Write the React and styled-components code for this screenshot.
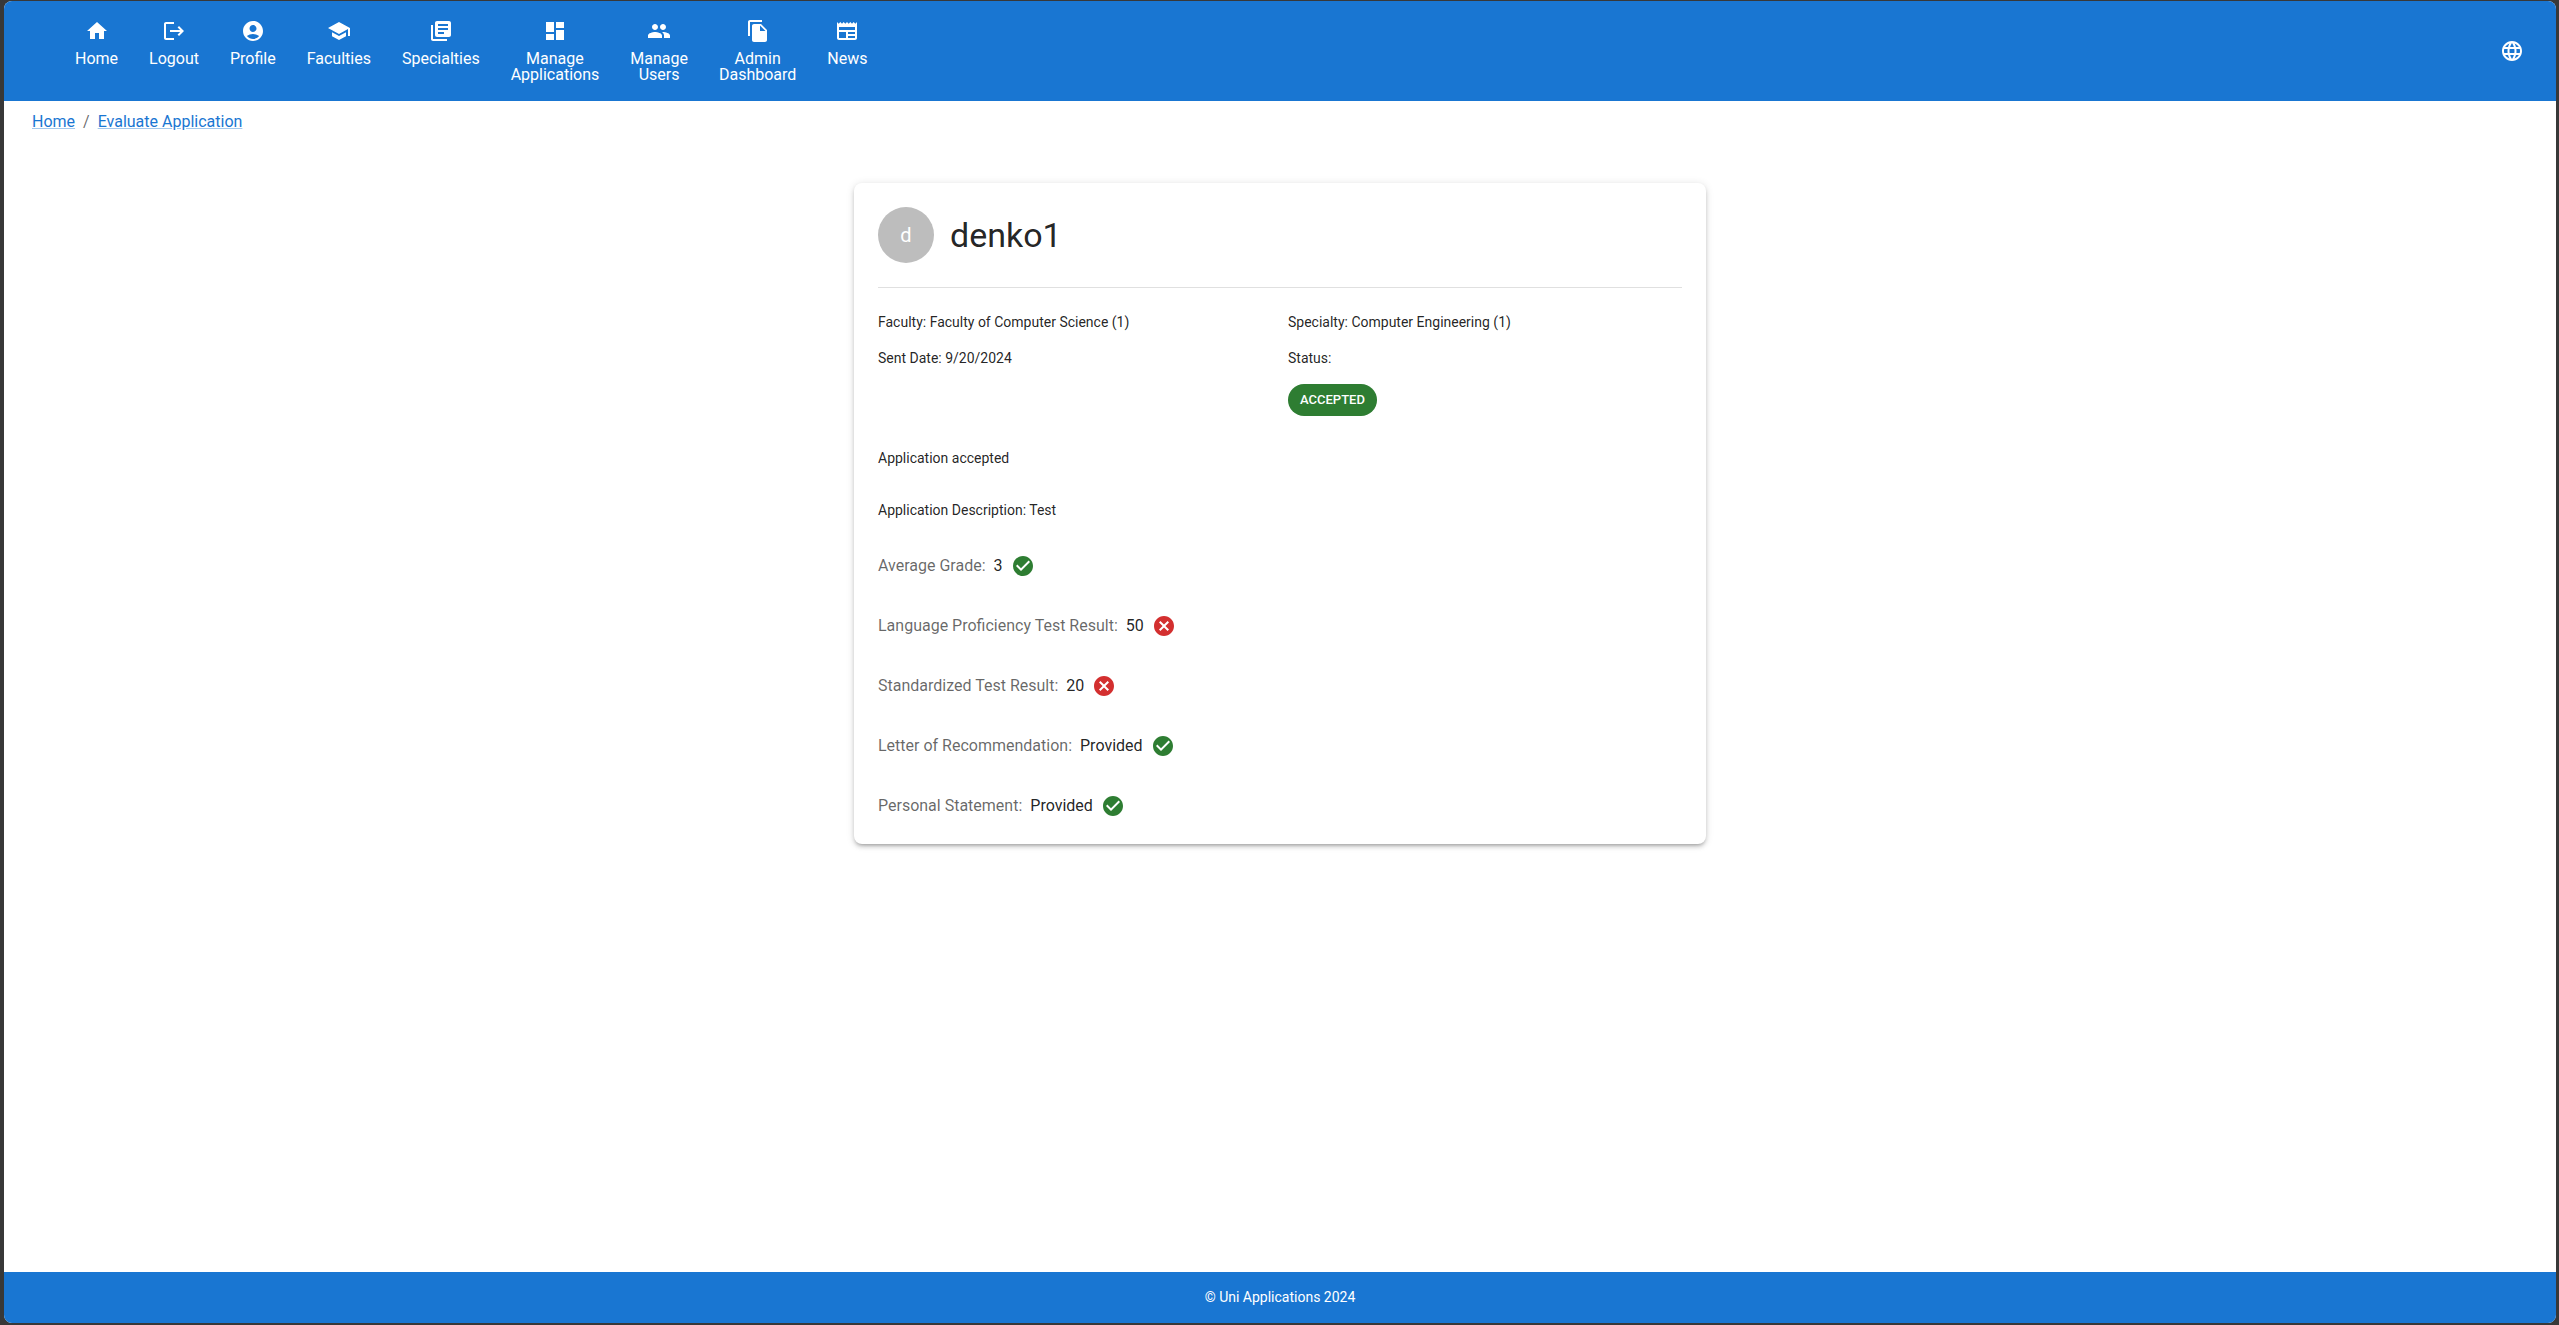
import React from "react";
import styled, { createGlobalStyle } from "styled-components";
import {
  MdHome,
  MdLogout,
  MdAccountCircle,
  MdSchool,
  MdLibraryBooks,
  MdDashboard,
  MdPeople,
  MdFileCopy,
  MdNewspaper,
  MdLanguage,
  MdCheckCircle,
  MdCancel,
} from "react-icons/md";

const GlobalStyle = createGlobalStyle`
  *, *::before, *::after { box-sizing: border-box; }
  body {
    margin: 0;
    background: #383838;
    color: rgba(0, 0, 0, 0.87);
    font-family: Roboto, "Liberation Sans", sans-serif;
    font-size: 16px;
    line-height: 24px;
  }
  ul, ol, dl, dd, p, h1 { margin: 0; padding: 0; }
  ul, ol { list-style: none; }
`;

const Page = styled.div`
  display: flex;
  min-height: 100vh;
  padding: 1px 3px 2px 4px;
`;

const Frame = styled.div`
  display: flex;
  flex: 1;
  flex-direction: column;
  overflow: hidden;
  border-radius: 8px;
  background: #fff;
`;

const Header = styled.header`
  display: flex;
  align-items: center;
  justify-content: space-between;
  min-height: 100px;
  padding: 0 24px 0 71px;
  background: #1976d2;
  color: #fff;
`;

const MainNav = styled.nav`
  align-self: flex-start;
  padding-top: 18px;
`;

const NavList = styled.ul`
  display: flex;
  gap: 31px;
`;

const NavLink = styled.a`
  display: flex;
  flex-direction: column;
  align-items: center;
  gap: 8px;
  color: inherit;
  line-height: 16px;
  text-align: center;
  text-decoration: none;
`;

const NavLabel = styled.span`
  white-space: pre-line;
`;

const IconButton = styled.button`
  display: flex;
  padding: 8px;
  border: 0;
  border-radius: 50%;
  background: transparent;
  color: inherit;
  cursor: pointer;
`;

const Crumbs = styled.ol`
  display: flex;
  gap: 8px;
  padding: 9px 28px;
  color: rgba(0, 0, 0, 0.6);
`;

const CrumbLink = styled.a`
  color: #1976d2;
  text-decoration: underline;
  text-decoration-color: rgba(25, 118, 210, 0.4);
`;

const Main = styled.main`
  flex: 1;
  width: 100%;
  max-width: 900px;
  margin: 0 auto;
  padding: 40px 24px;
`;

const Card = styled.article`
  padding: 24px 24px 8px;
  border-radius: 8px;
  background: #fff;
  box-shadow:
    0 3px 3px -2px rgba(0, 0, 0, 0.2),
    0 3px 4px 0 rgba(0, 0, 0, 0.14),
    0 1px 8px 0 rgba(0, 0, 0, 0.12);
`;

const Applicant = styled.div`
  display: flex;
  align-items: center;
  gap: 16px;
  padding-bottom: 24px;
  border-bottom: 1px solid rgba(0, 0, 0, 0.12);
`;

const Avatar = styled.div`
  display: flex;
  align-items: center;
  justify-content: center;
  width: 56px;
  height: 56px;
  border-radius: 50%;
  background: #bdbdbd;
  color: #fff;
  font-size: 20px;
`;

const Name = styled.h1`
  font-size: 34px;
  font-weight: 400;
  line-height: 42px;
`;

const Details = styled.div`
  display: grid;
  grid-template-columns: 1fr 1fr;
  gap: 16px;
  padding: 24px 0 32px;
`;

const Text = styled.p`
  font-size: 14px;
  line-height: 20px;
`;

const Status = styled.div`
  display: flex;
  flex-direction: column;
  align-items: flex-start;
  gap: 16px;
`;

const StatusChip = styled.span`
  padding: 0 12px;
  border-radius: 16px;
  background: #2e7d32;
  color: #fff;
  font-size: 13px;
  font-weight: 500;
  line-height: 32px;
  text-transform: uppercase;
`;

const Notes = styled.div`
  display: flex;
  flex-direction: column;
  gap: 32px;
  padding-bottom: 16px;
`;

const Criterion = styled.div`
  display: flex;
  align-items: center;
  gap: 8px;
  height: 60px;
`;

const Term = styled.dt`
  color: rgba(0, 0, 0, 0.6);
`;

const Value = styled.dd`
  display: flex;
  align-items: center;
  gap: 8px;

  svg {
    color: ${({ $met }) => ($met ? "#2e7d32" : "#d32f2f")};
  }
`;

const Footer = styled.footer`
  padding: 15px;
  background: #1976d2;
  color: #fff;
  font-size: 14px;
  line-height: 21px;
  text-align: center;
`;

const navItems = [
  { label: "Home", Icon: MdHome },
  { label: "Logout", Icon: MdLogout },
  { label: "Profile", Icon: MdAccountCircle },
  { label: "Faculties", Icon: MdSchool },
  { label: "Specialties", Icon: MdLibraryBooks },
  { label: "Manage\nApplications", Icon: MdDashboard },
  { label: "Manage\nUsers", Icon: MdPeople },
  { label: "Admin\nDashboard", Icon: MdFileCopy },
  { label: "News", Icon: MdNewspaper },
];

const criteria = [
  { term: "Average Grade:", value: "3", met: true },
  { term: "Language Proficiency Test Result:", value: "50", met: false },
  { term: "Standardized Test Result:", value: "20", met: false },
  { term: "Letter of Recommendation:", value: "Provided", met: true },
  { term: "Personal Statement:", value: "Provided", met: true },
];

export default function App() {
  return (
    <>
      <GlobalStyle />
      <Page>
        <Frame>
          <Header>
            <MainNav aria-label="Main">
              <NavList>
                {navItems.map(({ label, Icon }) => (
                  <li key={label}>
                    <NavLink href="#">
                      <Icon size={24} aria-hidden="true" />
                      <NavLabel>{label}</NavLabel>
                    </NavLink>
                  </li>
                ))}
              </NavList>
            </MainNav>
            <IconButton type="button" aria-label="Language">
              <MdLanguage size={24} />
            </IconButton>
          </Header>
          <nav aria-label="Breadcrumb">
            <Crumbs>
              <li><CrumbLink href="#">Home</CrumbLink></li>
              <li aria-hidden="true">/</li>
              <li><CrumbLink href="#">Evaluate Application</CrumbLink></li>
            </Crumbs>
          </nav>
          <Main>
            <Card>
              <Applicant>
                <Avatar>d</Avatar>
                <Name>denko1</Name>
              </Applicant>
              <Details>
                <Text>Faculty: Faculty of Computer Science (1)</Text>
                <Text>Specialty: Computer Engineering (1)</Text>
                <Text>Sent Date: 9/20/2024</Text>
                <Status>
                  <Text>Status:</Text>
                  <StatusChip>Accepted</StatusChip>
                </Status>
              </Details>
              <Notes>
                <Text>Application accepted</Text>
                <Text>Application Description: Test</Text>
              </Notes>
              <dl>
                {criteria.map(({ term, value, met }) => (
                  <Criterion key={term}>
                    <Term>{term}</Term>
                    <Value $met={met}>
                      {value}
                      {met ? (
                        <MdCheckCircle size={24} aria-label="Requirement met" />
                      ) : (
                        <MdCancel size={24} aria-label="Requirement not met" />
                      )}
                    </Value>
                  </Criterion>
                ))}
              </dl>
            </Card>
          </Main>
          <Footer>© Uni Applications 2024</Footer>
        </Frame>
      </Page>
    </>
  );
}
